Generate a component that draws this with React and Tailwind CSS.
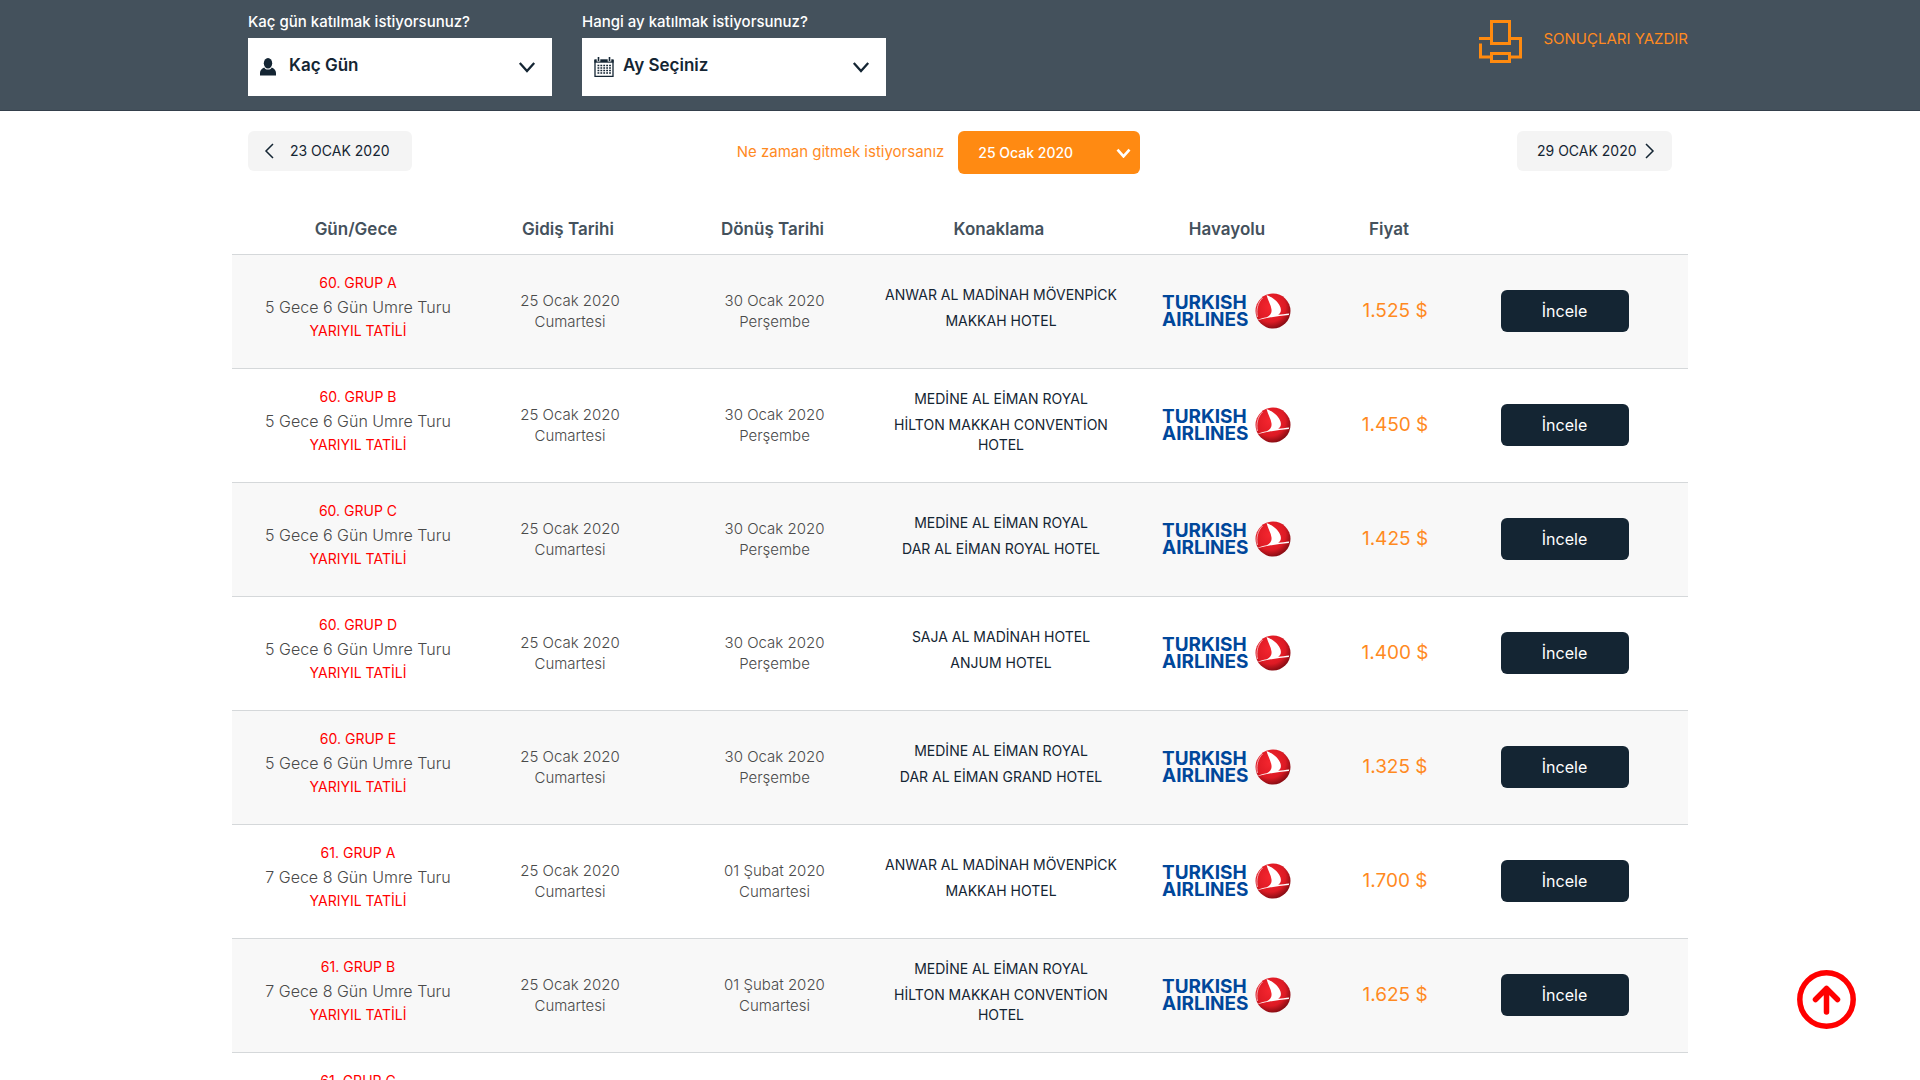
/**
 * App.jsx — Umre tour search results
 *
 * Filter bar on top, day navigation below it, then the result table.
 */
import React, { useState } from 'react';

const YARIYIL = 'YARIYIL TATİLİ';

const TOURS = [
  { id: '60a', group: '60. GRUP A', name: '5 Gece 6 Gün Umre Turu', back: ['30 Ocak 2020', 'Perşembe'], hotels: ['ANWAR AL MADİNAH MÖVENPİCK', 'MAKKAH HOTEL'], price: '1.525 $' },
  { id: '60b', group: '60. GRUP B', name: '5 Gece 6 Gün Umre Turu', back: ['30 Ocak 2020', 'Perşembe'], hotels: ['MEDİNE AL EİMAN ROYAL', 'HİLTON MAKKAH CONVENTİON HOTEL'], price: '1.450 $' },
  { id: '60c', group: '60. GRUP C', name: '5 Gece 6 Gün Umre Turu', back: ['30 Ocak 2020', 'Perşembe'], hotels: ['MEDİNE AL EİMAN ROYAL', 'DAR AL EİMAN ROYAL HOTEL'], price: '1.425 $' },
  { id: '60d', group: '60. GRUP D', name: '5 Gece 6 Gün Umre Turu', back: ['30 Ocak 2020', 'Perşembe'], hotels: ['SAJA AL MADİNAH HOTEL', 'ANJUM HOTEL'], price: '1.400 $' },
  { id: '60e', group: '60. GRUP E', name: '5 Gece 6 Gün Umre Turu', back: ['30 Ocak 2020', 'Perşembe'], hotels: ['MEDİNE AL EİMAN ROYAL', 'DAR AL EİMAN GRAND HOTEL'], price: '1.325 $' },
  { id: '61a', group: '61. GRUP A', name: '7 Gece 8 Gün Umre Turu', back: ['01 Şubat 2020', 'Cumartesi'], hotels: ['ANWAR AL MADİNAH MÖVENPİCK', 'MAKKAH HOTEL'], price: '1.700 $' },
  { id: '61b', group: '61. GRUP B', name: '7 Gece 8 Gün Umre Turu', back: ['01 Şubat 2020', 'Cumartesi'], hotels: ['MEDİNE AL EİMAN ROYAL', 'HİLTON MAKKAH CONVENTİON HOTEL'], price: '1.625 $' },
  { id: '61c', group: '61. GRUP C', name: '7 Gece 8 Gün Umre Turu', back: ['01 Şubat 2020', 'Cumartesi'], hotels: ['MEDİNE AL EİMAN ROYAL', 'DAR AL EİMAN ROYAL HOTEL'], price: '1.600 $' },
];

function Chevron({ className, d = 'M2 2l8 9 8-9', box = '0 0 20 13', width = 2 }) {
  return (
    <svg viewBox={box} fill="none" stroke="currentColor" strokeWidth={width} className={className} aria-hidden="true">
      <path d={d} />
    </svg>
  );
}

function PersonIcon() {
  return (
    <svg viewBox="0 0 16 18" className="w-4 h-[18px]" fill="#142533" aria-hidden="true">
      <ellipse cx="8" cy="5.2" rx="4.2" ry="5.2" />
      <path d="M4.2 9.4C1.6 10.4 0 12.4 0 15v2.6h16V15c0-2.6-1.600-4.600-4.200-5.600C10.900 10.900 9.600 11.600 8 11.600S5.100 10.900 4.200 9.400z" />
    </svg>
  );
}

function CalendarIcon() {
  return (
    <svg viewBox="0 0 20 20" className="w-5 h-5" fill="none" stroke="#142533" aria-hidden="true">
      <path d="M1 3v16.300h18V3" strokeWidth="1.300" />
      <path d="M.4 4h19.200" strokeWidth="3.400" />
      <path d="M4.500 0v4.500M15.500 0v4.500" stroke="#fff" strokeWidth="3.600" />
      <path d="M4.500 0v4M15.500 0v4" strokeWidth="1.600" />
      <path d="M3.500 8.500h13.500M3.500 11h13.500M3.500 13.500h13.500M3.500 16h13.500" strokeWidth="1.400" strokeDasharray="1.800 1.100" />
    </svg>
  );
}

function PrinterIcon() {
  return (
    <svg viewBox="0 0 43 43" className="w-[43px] h-[43px]" fill="none" stroke="#ff8a0f" strokeWidth="3" aria-hidden="true">
      <path d="M12.500 1.500h18v22h-18z" />
      <path d="M0 18.500h12.500M30.500 18.500h11v18.500h-11M12.500 37H1.500V23.500" />
      <path d="M12.500 33.500h18v8h-18z" />
    </svg>
  );
}

function TurkishAirlinesLogo() {
  return (
    <svg viewBox="0 0 130 38" className="w-[130px] h-[38px] mx-auto" role="img" aria-label="Turkish Airlines">
      <defs>
        <radialGradient id="thy-ball" cx="42%" cy="38%" r="62%">
          <stop offset="0" stopColor="#f5262f" />
          <stop offset="0.700" stopColor="#dd1a24" />
          <stop offset="1" stopColor="#8c0d14" />
        </radialGradient>
      </defs>
      <text fill="#00479b" fontFamily="Inter, sans-serif" fontWeight="700" fontSize="19">
        <tspan x="0" y="17">TURKISH</tspan>
        <tspan x="0" y="34">AIRLINES</tspan>
      </text>
      <circle cx="111" cy="19" r="17.500" fill="url(#thy-ball)" />
      <path d="M104.500 3c1.500 5.500 4.500 10 5 14.500.4 3.800-1.400 6.300-4.700 7.800-4 .8-7 1.700-9.800 3 10.500-2.700 21.500-4.500 31.800-5.300l.4-1.400c-3.600.4-7.600.9-11 1.100 2.600-1.700 3.300-4.300 2.200-7.500-1.700-5-7.500-10-13.900-12.200z" fill="#fff" />
      <path d="M100.500 6c-4.800 4.600-6.600 12-5 19" fill="none" stroke="#ffffff99" strokeWidth="1" />
    </svg>
  );
}

function FilterSelect({ id, label, icon, option }) {
  return (
    <div className="w-[304px]">
      <label htmlFor={id} className="block h-[38px] pt-3 text-[15px] leading-5 font-medium text-white">
        {label}
      </label>
      <div className="relative flex items-center h-[58px] bg-white text-[#142533]">
        <span className="absolute left-3 pointer-events-none">{icon}</span>
        <select id={id} className="appearance-none w-full h-full pl-[41px] pb-[2px] text-[17px] font-semibold bg-transparent">
          <option>{option}</option>
        </select>
        <Chevron className="absolute right-4 w-[18px] h-3 pointer-events-none" width={2.5} />
      </div>
    </div>
  );
}

function TourRow({ tour }) {
  return (
    <tr className="h-[114px] border-b border-[#d5d8da] odd:bg-[#f8f8f8]">
      <td className="pb-2">
        <p className="text-sm leading-6 text-[#ff0000]">{tour.group}</p>
        <p className="text-base leading-6 font-light">{tour.name}</p>
        <p className="text-sm leading-6 text-[#ff0000]">{YARIYIL}</p>
      </td>
      <td className="text-[15px] leading-[21px] font-light">
        <p>25 Ocak 2020</p>
        <p>Cumartesi</p>
      </td>
      <td className="pl-2 text-[15px] leading-[21px] font-light">
        {tour.back.map((line) => <p key={line}>{line}</p>)}
      </td>
      <td className="pb-[6px] text-sm leading-5 text-[#142533]">
        {tour.hotels.map((hotel) => <p key={hotel} className="mt-[6px] first:mt-0">{hotel}</p>)}
      </td>
      <td><TurkishAirlinesLogo /></td>
      <td className="text-[19px] text-[#ff8a1f]">{tour.price}</td>
      <td className="pr-3">
        <button type="button" className="w-32 h-[42px] rounded-md bg-[#142533] text-base text-white">
          İncele
        </button>
      </td>
    </tr>
  );
}

export default function App() {
  const [date, setDate] = useState('25 Ocak 2020');

  return (
    <div className="h-screen overflow-hidden bg-white text-[#4a4a4a] font-['Inter',sans-serif]">
      {/* Filter bar */}
      <header className="h-[111px] bg-[#44515c] border-b border-[#343f4b]">
        <div className="max-w-[1456px] mx-auto pl-4 flex justify-between">
          <div className="flex gap-[30px]">
            <FilterSelect id="days" label="Kaç gün katılmak istiyorsunuz?" icon={<PersonIcon />} option="Kaç Gün" />
            <FilterSelect id="month" label="Hangi ay katılmak istiyorsunuz?" icon={<CalendarIcon />} option="Ay Seçiniz" />
          </div>
          <button type="button" className="flex items-center gap-[21px] h-[83px] text-[15px] text-[#ff8a1f]">
            <PrinterIcon />
            <span className="pb-1">SONUÇLARI YAZDIR</span>
          </button>
        </div>
      </header>

      <main className="max-w-[1456px] mx-auto">
        {/* Day navigation */}
        <div className="flex justify-between items-start pt-5 px-4 text-[15px]">
          <button type="button" className="flex items-center gap-4 w-[164px] h-10 pl-4 rounded-md bg-[#f4f4f4] text-sm text-[#142533]">
            <Chevron className="w-[10px] h-4" box="0 0 10 16" d="M9 1L2 8l7 7" width={1.5} />
            23 OCAK 2020
          </button>
          <div className="flex items-center gap-[14px] pr-[52px]">
            <label htmlFor="date" className="text-[#ff8a1f]">Ne zaman gitmek istiyorsanız</label>
            <div className="relative flex items-center">
              <select
                id="date"
                value={date}
                onChange={(e) => setDate(e.target.value)}
                className="appearance-none w-[182px] h-[43px] pl-5 rounded-md bg-[#ff8a12] text-sm font-medium text-white"
              >
                <option>25 Ocak 2020</option>
              </select>
              <Chevron className="absolute right-[9px] w-[15px] h-[10px] text-white pointer-events-none" width={3.5} />
            </div>
          </div>
          <button type="button" className="flex items-center gap-2 w-[155px] h-10 pl-5 rounded-md bg-[#f4f4f4] text-sm text-[#142533]">
            29 OCAK 2020
            <Chevron className="w-[10px] h-4" box="0 0 10 16" d="M1 1l7 7-7 7" width={1.5} />
          </button>
        </div>

        {/* Results */}
        <table className="w-full mt-8 table-fixed text-center">
          <thead>
            <tr className="h-12 border-b border-[#d5d8da] text-[17px] text-[#44515c]">
              <th className="w-[252px] pr-1 font-semibold">Gün/Gece</th>
              <th className="w-[172px] pr-1 font-semibold">Gidiş Tarihi</th>
              <th className="w-[229px] pl-1 font-semibold">Dönüş Tarihi</th>
              <th className="w-[232px] pr-1 font-semibold">Konaklama</th>
              <th className="w-[220px] font-semibold">Havayolu</th>
              <th className="w-[116px] pr-3 font-semibold">Fiyat</th>
              <th className="w-[235px]" />
            </tr>
          </thead>
          <tbody>
            {TOURS.map((tour) => <TourRow key={tour.id} tour={tour} />)}
          </tbody>
        </table>
      </main>

      {/* Back to top */}
      <button type="button" aria-label="Yukarı çık" className="fixed right-16 bottom-[51px] w-[59px] h-[59px]">
        <svg viewBox="0 0 59 59" fill="none" stroke="#ff0000" strokeWidth="5.500" strokeLinecap="round" strokeLinejoin="round">
          <circle cx="29.500" cy="29.500" r="26.700" />
          <path d="M29.500 42V18.500M18.500 29.500l11-11 11 11" />
        </svg>
      </button>
    </div>
  );
}
